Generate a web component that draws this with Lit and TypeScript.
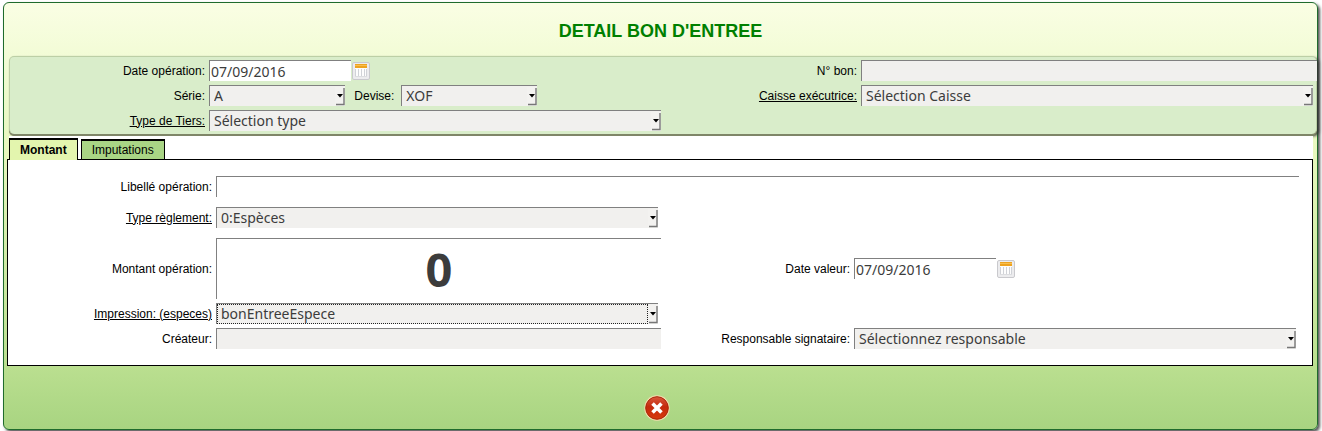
import { LitElement, html, css, svg } from "lit";
import { customElement, property } from "lit/decorators.js";

const calendarIcon = html`<svg class="cal" viewBox="0 0 18 18" aria-hidden="true">
  <rect x="0.5" y="0.5" width="17" height="17" rx="1.5" fill="#ececee" stroke="#c9c9cd" />
  <rect x="3" y="3" width="12" height="12" fill="#fdfdfd" />
  <rect x="3" y="2" width="12" height="4" fill="#eea320" />
  <rect x="3" y="3" width="12" height="1" fill="#f7bf50" />
  ${[3, 6, 9, 12, 14].map((x) => svg`<rect x=${x} y="7" width="1" height="8" fill="#d0d2d7" />`)}
  <rect x="3" y="14" width="12" height="1" fill="#dcdde0" />
</svg>`;

@customElement("drop-down")
class DropDown extends LitElement {
  @property() value = "";
  @property() label = "";
  @property({ type: Boolean }) marked = false;

  static styles = css`
    :host {
      display: block;
      min-width: 0;
    }
    .box {
      display: grid;
      grid-template-columns: minmax(0, 1fr) 10px;
      height: 21px;
      box-sizing: border-box;
      border-top: 1px solid #808080;
      border-left: 1px solid #808080;
      background: #f1f0ee;
    }
    select {
      grid-area: 1 / 1 / 2 / 3;
      appearance: none;
      border: 0;
      margin: 0;
      padding: 0 12px 0 4px;
      width: 100%;
      height: 20px;
      border-radius: 0;
      background: transparent;
      color: #3c3c3c;
      font: 14px/20px "Noto Sans", "Open Sans", sans-serif;
      outline: none;
    }
    .marked select {
      grid-area: 1 / 1 / 2 / 2;
      border: 1px dotted #222;
      padding: 0 0 0 3px;
      line-height: 18px;
    }
    .arrow {
      grid-area: 1 / 2 / 2 / 3;
      width: 10px;
      height: 20px;
      pointer-events: none;
    }
  `;

  render() {
    return html`<div class="box ${this.marked ? "marked" : ""}">
      <select aria-label=${this.label}>
        <option>${this.value}</option>
      </select>
      <svg class="arrow" viewBox="0 0 10 20" aria-hidden="true">
        <path d="M0 1H9V19H0Z" fill="#f3f2f0" />
        <path d="M1 18.5H9V2" fill="none" stroke="#777" stroke-width="1.4" />
        <path d="M2 8H8L5 11.500Z" fill="#000" />
      </svg>
    </div>`;
  }
}

@customElement("app-root")
class AppRoot extends LitElement {
  static styles = css`
    :host {
      display: block;
      overflow: hidden;
      padding: 2px 4px 2px 3px;
      font: 12px/16px "Liberation Sans", Arial, sans-serif;
      color: #000;
    }
    .panel {
      display: flow-root;
      border: 1px solid #1f6b2c;
      border-radius: 6px;
      background: linear-gradient(#fafee4, #f0fbd2 16%, #e7f7bd 36%, #bce091 84%, #a8d481);
      box-shadow: 2px 2px 3px #555;
    }
    h1 {
      margin: 0;
      padding: 4px 0 0;
      text-align: center;
      font-size: 18px;
      line-height: 49px;
      color: #008000;
    }
    .head {
      display: grid;
      grid-template-columns: 196fr 452fr 194fr 452fr;
      gap: 4px 3px;
      align-items: center;
      margin-left: 5px;
      padding: 3px 3px 3px 0;
      border: 1px solid #bccfa6;
      border-bottom: 0;
      border-radius: 5px;
      background: #d9edca;
      box-shadow: 0 2px 0 #7f8668, 2px 2px 3px #333;
    }
    label {
      display: block;
      padding-right: 1px;
      text-align: right;
      white-space: nowrap;
    }
    .link {
      text-decoration: underline;
    }
    .line {
      display: flex;
      align-items: center;
      gap: 1px;
      min-width: 0;
    }
    .series {
      gap: 6px;
    }
    .series drop-down {
      flex: 0 1 136px;
    }
    input {
      box-sizing: border-box;
      width: 100%;
      min-width: 0;
      height: 21px;
      margin: 0;
      padding: 0 0 0 1px;
      border: 0 solid #808080;
      border-width: 1px 0 0 1px;
      border-radius: 0;
      background: #fff;
      color: #3c3c3c;
      font: 14px/20px "Noto Sans", "Open Sans", sans-serif;
      outline: none;
    }
    .date {
      width: 142px;
    }
    .off {
      background: #f1f0ee;
    }
    .wide {
      width: auto;
      margin-right: -4px;
    }
    .icon {
      display: block;
      padding: 0;
      border: 0;
      background: none;
    }
    .cal {
      display: block;
      width: 18px;
      height: 18px;
    }
    .tabs {
      display: flex;
      align-items: flex-end;
      gap: 3px;
      margin: 2px 4px 0 5px;
      padding-top: 2px;
      background: #fff;
    }
    .tab {
      box-sizing: border-box;
      height: 20px;
      padding: 0 10px;
      border: 1px solid #000;
      border-width: 2px 1px 0 1px;
      background: #a9d585;
      font: 12px/18px "Liberation Sans", Arial, sans-serif;
      color: #000;
    }
    .current {
      position: relative;
      height: 22px;
      margin-bottom: -1px;
      background: #e3f5ae;
      font-weight: bold;
    }
    .body {
      display: flex;
      flex-direction: column;
      gap: 4px;
      margin: 0 4px 0 3px;
      padding: 16px 13px 16px 0;
      border: 1px solid #000;
      background: #fff;
    }
    .row {
      display: grid;
      grid-template-columns: 205fr 445fr 187fr 445fr;
      column-gap: 3px;
      align-items: center;
    }
    .spaced {
      margin-bottom: 6px;
    }
    .span {
      grid-column: 2 / 5;
    }
    .row drop-down {
      margin-right: 3px;
    }
    .amount {
      height: 61px;
      padding: 0;
      text-align: center;
      font-size: 47px;
      line-height: 60px;
      font-weight: bold;
    }
    .foot {
      display: flex;
      justify-content: center;
      padding: 29px 8px 8px 0;
    }
    .close {
      display: block;
      width: 26px;
      height: 26px;
    }
  `;

  render() {
    return html`<main class="panel">
      <h1>DETAIL BON D'ENTREE</h1>
      <section class="head">
        <label for="dop">Date opération:</label>
        <div class="line">
          <input id="dop" class="date" value="07/09/2016" />
          <button class="icon" aria-label="Calendrier">${calendarIcon}</button>
        </div>
        <label for="bon">N° bon:</label>
        <input id="bon" class="off wide" readonly />

        <label for="serie">Série:</label>
        <div class="line series">
          <drop-down id="serie" label="Série" value="A"></drop-down>
          <label for="devise">&nbsp;Devise:</label>
          <drop-down id="devise" label="Devise" value="XOF"></drop-down>
        </div>
        <label class="link" for="caisse">Caisse exécutrice:</label>
        <drop-down id="caisse" label="Caisse exécutrice" value="Sélection Caisse"></drop-down>

        <label class="link" for="tiers">Type de Tiers:</label>
        <drop-down id="tiers" label="Type de Tiers" value="Sélection type"></drop-down>
      </section>

      <div class="tabs" role="tablist">
        <button class="tab current" role="tab" aria-selected="true">Montant</button>
        <button class="tab" role="tab" aria-selected="false">Imputations</button>
      </div>

      <section class="body">
        <div class="row spaced">
          <label for="lib">Libellé opération:</label>
          <input id="lib" class="span" />
        </div>
        <div class="row spaced">
          <label class="link" for="regl">Type règlement:</label>
          <drop-down id="regl" label="Type règlement" value="0:Espèces"></drop-down>
        </div>
        <div class="row">
          <label for="montant">Montant opération:</label>
          <input id="montant" class="amount" value="0" />
          <label for="dval">Date valeur:</label>
          <div class="line">
            <input id="dval" class="date" value="07/09/2016" />
            <button class="icon" aria-label="Calendrier">${calendarIcon}</button>
          </div>
        </div>
        <div class="row">
          <label class="link" for="imp">Impression: (especes)</label>
          <drop-down id="imp" label="Impression" value="bonEntreeEspece" marked></drop-down>
        </div>
        <div class="row">
          <label for="crea">Créateur:</label>
          <input id="crea" class="off" readonly />
          <label for="resp">Responsable signataire:</label>
          <drop-down id="resp" label="Responsable signataire" value="Sélectionnez responsable"></drop-down>
        </div>
      </section>

      <footer class="foot">
        <button class="icon" aria-label="Fermer">
          <svg class="close" viewBox="0 0 26 26" aria-hidden="true">
            <defs>
              <linearGradient id="red" x1="0" y1="0" x2="0" y2="1">
                <stop offset="0" stop-color="#d9573c" />
                <stop offset="0.45" stop-color="#c42a0c" />
                <stop offset="1" stop-color="#d8390c" />
              </linearGradient>
            </defs>
            <circle cx="13" cy="13" r="12.700" fill="#f3dcae" />
            <circle cx="13" cy="13" r="11.300" fill="url(#red)" stroke="#a92608" />
            <path d="M9.800 9.800L16.200 16.200M16.200 9.800L9.800 16.200" stroke="#fff" stroke-width="3.600" stroke-linecap="square" />
          </svg>
        </button>
      </footer>
    </main>`;
  }
}
